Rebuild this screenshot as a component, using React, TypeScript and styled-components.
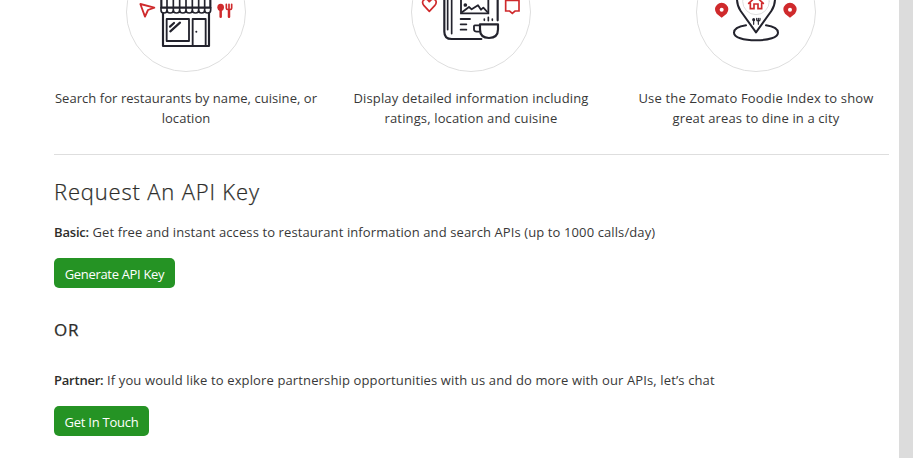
import React from "react";
import styled, { createGlobalStyle } from "styled-components";

const INK = "#23232d";
const RED = "#cf2a2c";

const GlobalStyle = createGlobalStyle`
  html, body { margin: 0; padding: 0; background: #fff; }
  body { height: 458px; overflow: hidden; }
  * { box-sizing: border-box; }
`;

const Page = styled.div`
  display: flex;
  width: 913px;
  height: 458px;
  overflow: hidden;
  background: #fff;
  color: #383838;
  font-family: "Open Sans", "Noto Sans", sans-serif;
  font-size: 13px;
  line-height: 20px;
`;

const Content = styled.main`
  flex: 1;
  padding: 0 10px 0 54px;
`;

const Gutter = styled.aside`
  width: 14px;
  background: #dcdcdc;
`;

const Features = styled.section`
  display: grid;
  grid-template-columns: repeat(3, 265px);
  column-gap: 20px;
  height: 155px;
  border-bottom: 1px solid #dedede;
`;

const Feature = styled.div`
  display: flex;
  flex-direction: column;
  align-items: center;
  margin-top: -48px;
  width: 264px;
`;

const Badge = styled.svg`
  display: block;
  flex: none;
  width: 120px;
  height: 120px;
  margin-bottom: 16px;
  overflow: hidden;
`;

const Line = styled.span<{ $track: number }>`
  display: block;
  white-space: nowrap;
  letter-spacing: ${(p) => p.$track}px;
`;

const Title = styled.h2`
  margin: 21px 0 0;
  color: #2d2d2a;
  font-size: 22px;
  line-height: 30px;
  font-weight: 300;
  letter-spacing: 0.83px;
  -webkit-text-stroke: 0.25px #2d2d2a;
`;

const Plan = styled.p<{ $top: number; $track: number }>`
  margin: ${(p) => p.$top}px 0 0;
  white-space: nowrap;
  letter-spacing: ${(p) => p.$track}px;
`;

const Label = styled.strong<{ $track: number }>`
  color: #2d2d2a;
  font-weight: 600;
  letter-spacing: ${(p) => p.$track}px;
`;

const Button = styled.button<{ $width: number; $track: number }>`
  display: block;
  width: ${(p) => p.$width}px;
  height: 30px;
  margin: 16px 0 0;
  padding: 2px 0 0;
  border: 0;
  border-radius: 5px;
  background: #259324;
  color: #fff;
  font: 500 13px/20px "Open Sans", "Noto Sans", sans-serif;
  letter-spacing: ${(p) => p.$track}px;
  white-space: nowrap;
`;

const Or = styled.h3`
  margin: 30px 0 0;
  color: #2d2d2a;
  font-size: 17px;
  line-height: 24px;
  font-weight: 500;
  letter-spacing: 0.9px;
  -webkit-text-stroke: 0.25px #2d2d2a;
`;

const Ring = () => <circle cx="60" cy="12" r="59.5" fill="#fff" stroke="#dedede" />;

const StoreIcon = () => (
  <Badge viewBox="0 -48 120 120">
    <Ring />
    <g transform="translate(-10 0) scale(.33333)" fill="none" stroke={INK} strokeWidth="6.500" strokeLinejoin="round" strokeLinecap="round">
      <path d="M136 23V0L147 -24H271L283 0V23Z" />
      <path d="M135 23v7q0 9 9 9t9-9v-7v7q0 9 9.500 9t9.500-9v-7v7q0 9 9.500 9t9.500-9v-7v7q0 9 9.500 9t9.500-9v-7v7q0 9 9.500 9t9.500-9v-7v7q0 9 9.500 9t9.500-9v-7v7q0 9 9 9t9-9v-7v7q0 9 9 9t9-9v-7" strokeWidth="5" />
      <path d="M153 23V-20M172 23V-20M191 23V-20M210 23V-20M229 23V-20M248 23V-20M266 23V-20" strokeWidth="5" />
      <path d="M141 40V138H279V40" />
      <path d="M152 57H219V123H152ZM230 138V57H269V138" strokeWidth="5.500" />
      <path d="M162 80L174 69M163 94L192 68" />
      <circle cx="241" cy="95" r="3" fill={INK} stroke="none" />
      <path d="M73 12L115 23L96 30L87 50Z" stroke={RED} strokeWidth="5.500" />
      <g fill={RED} stroke={RED}>
        <ellipse cx="314" cy="22" rx="10" ry="11" stroke="none" />
        <path d="M314 28V50" strokeWidth="7.500" />
        <path d="M331 13V24Q331 29 339 29T347 24V13M339 13V50" fill="none" strokeWidth="5" />
        <path d="M339 32V50" strokeWidth="7.500" />
      </g>
    </g>
  </Badge>
);

const GuideIcon = () => (
  <Badge viewBox="0 -48 120 120">
    <Ring />
    <g transform="translate(-11 0) scale(.33333)" fill="none" stroke={INK} strokeWidth="6.500" strokeLinejoin="round" strokeLinecap="round">
      <path d="M133 -40V95Q133 117 155 117H244M293 -40V61" />
      <path d="M143 -40V89M155 -40V101" strokeWidth="5" />
      <path d="M183 -14H265V40H183Z" strokeWidth="5.500" strokeLinejoin="miter" />
      <path d="M187 36L207 21L215 28L234 16L243 29L250 23L262 36" strokeWidth="5.500" />
      <circle cx="196" cy="15" r="5.500" fill={INK} stroke="none" />
      <path d="M182 57H210M182 73H199M182 89H199" strokeWidth="5.500" />
      <path d="M253 57V61M265 52V62M277 57V61" strokeWidth="5" />
      <path d="M240 73H294V88Q294 114 267 114T240 88Z" />
      <path d="M240 76H225Q221 76 222 82V89Q223 95 230 95H240" strokeWidth="5.500" />
      <path d="M88 34L72 17Q64 7 71 0Q80 -7 88 5Q97 -7 106 0Q112 7 104 17Z" stroke={RED} strokeWidth="5" />
      <path d="M317 1H357V33H345L337 40L329 33H317Z" stroke={RED} strokeWidth="5" strokeLinejoin="miter" />
    </g>
  </Badge>
);

const PlaceIcon = () => (
  <Badge viewBox="0 -48 120 120">
    <Ring />
    <g transform="translate(-10 0) scale(.33333)" fill="none" stroke={INK} strokeWidth="6" strokeLinejoin="round" strokeLinecap="round">
      <path d="M180 76C160 79 144 87 144 98C144 112 172 121 210 121S276 112 276 98C276 87 260 79 240 76" />
      <path d="M210 97L164 33Q153 17 153 -3A57 57 0 0 1 267 -3Q267 17 256 33Z" />
      <circle cx="210" cy="4" r="40" stroke="#dedede" strokeWidth="3" />
      <path d="M188 10L210 -10L232 10M193 8V26H204V12H216V26H227V8" stroke={RED} strokeWidth="5" strokeLinejoin="miter" />
      <ellipse cx="203" cy="59" rx="4.500" ry="5" fill={INK} stroke="none" />
      <path d="M203 60V73M212 55V60Q212 63 217 63T222 60V55M217 55V73" strokeWidth="3.500" />
      {[107, 312].map((x) => (
        <g key={x}>
          <path d={`M${x} 53L${x - 15} 41A20 19.500 0 1 1 ${x + 15} 41Z`} fill={RED} stroke="none" />
          <circle cx={x} cy="29" r="6" fill="#fff" stroke="none" />
        </g>
      ))}
    </g>
  </Badge>
);

export default function App() {
  return (
    <>
      <GlobalStyle />
      <Page>
        <Content>
          <Features>
            <Feature>
              <StoreIcon />
              <Line $track={0.05}>Search for restaurants by name, cuisine, or</Line>
              <Line $track={0.05}>location</Line>
            </Feature>
            <Feature>
              <GuideIcon />
              <Line $track={0.14}>Display detailed information including</Line>
              <Line $track={0.14}>ratings, location and cuisine</Line>
            </Feature>
            <Feature>
              <PlaceIcon />
              <Line $track={0.17}>Use the Zomato Foodie Index to show</Line>
              <Line $track={0.13}>great areas to dine in a city</Line>
            </Feature>
          </Features>
          <Title>Request An API Key</Title>
          <Plan $top={16} $track={0.105}>
            <Label $track={-0.18}>Basic:</Label> Get free and instant access to restaurant information and search APIs (up to 1000 calls/day)
          </Plan>
          <Button $width={121} $track={-0.32}>Generate API Key</Button>
          <Or>OR</Or>
          <Plan $top={28} $track={0.133}>
            <Label $track={-0.22}>Partner:</Label> If you would like to explore partnership opportunities with us and do more with our APIs, let’s chat
          </Plan>
          <Button $width={95} $track={-0.25}>Get In Touch</Button>
        </Content>
        <Gutter />
      </Page>
    </>
  );
}
